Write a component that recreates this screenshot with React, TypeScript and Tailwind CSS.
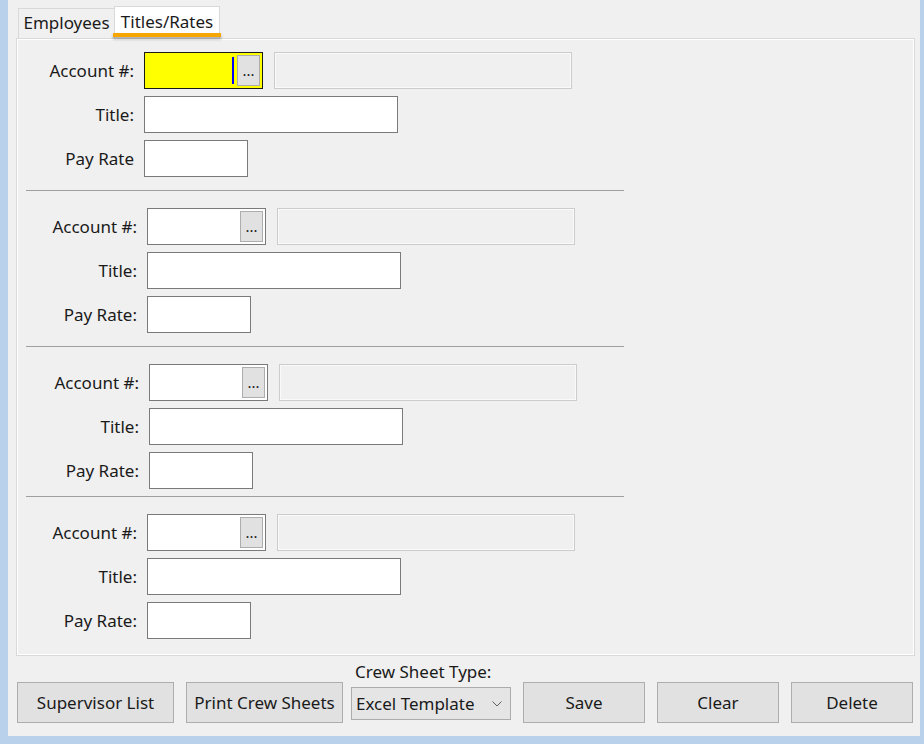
import React from "react";

const font = { fontFamily: '"Noto Sans", "Open Sans", sans-serif' };

type SectionProps = {
  labelWidth: string;
  top: string;
  focused?: boolean;
  payLabel: string;
};

const Section = ({ labelWidth, top, focused, payLabel }: SectionProps) => {
  return (
    <div className={`flex flex-col gap-[7px] ${top}`}>
      <div className="flex items-center">
        <span className={`${labelWidth} mr-[10px] text-right`}>Account #:</span>
        {focused ? (
          <div className="flex h-[37px] w-[119px] items-stretch border border-[#1a1a1a] bg-[#ffff00] p-[2px]">
            <div className="flex flex-1 items-center justify-end pr-[3px]">
              <div className="h-[27px] w-[2px] bg-[#0000ff]" />
            </div>
            <button className="flex w-[23px] items-end justify-center border border-[#adadad] bg-[#e1e1e1] pb-[7px] text-[15px] leading-none">
              ...
            </button>
          </div>
        ) : (
          <div className="flex h-[37px] w-[119px] items-stretch border border-[#7a7a7a] bg-white p-[2px]">
            <div className="flex-1" />
            <button className="flex w-[23px] items-end justify-center border border-[#adadad] bg-[#e1e1e1] pb-[7px] text-[15px] leading-none">
              ...
            </button>
          </div>
        )}
        <div className="ml-[11px] h-[37px] w-[298px] border border-[#cccccc] bg-[#f0f0f0] shadow-[inset_1px_1px_0_#fafafa,inset_-1px_-1px_0_#fafafa]" />
      </div>
      <div className="flex items-center">
        <span className={`${labelWidth} mr-[10px] text-right`}>Title:</span>
        <div className="h-[37px] w-[254px] border border-[#7a7a7a] bg-white" />
      </div>
      <div className="flex items-center">
        <span className={`${labelWidth} mr-[10px] text-right`}>{payLabel}</span>
        <div className="h-[37px] w-[104px] border border-[#7a7a7a] bg-white" />
      </div>
    </div>
  );
};

const Divider = ({ top }: { top: string }) => (
  <div className={`ml-[9px] h-px w-[598px] bg-[#a0a0a0] ${top}`} />
);

const BottomButton = ({ label, width }: { label: string; width: string }) => (
  <button
    className={`h-[41px] ${width} border border-[#adadad] bg-[#e1e1e1] text-[17px] text-[#1a1a1a]`}
  >
    {label}
  </button>
);

export default function App() {
  return (
    <div
      className="h-[744px] w-[924px] overflow-hidden bg-[#b9d1ea] text-[17px] text-[#1a1a1a]"
      style={font}
    >
      <div className="ml-[8px] h-[736px] w-[912px] bg-[#f0f0f0]">
        {/* tab headers */}
        <div className="flex h-[38px] items-end pl-[10px]">
          <div className="flex h-[30px] w-[96px] items-center justify-center border-l border-t border-[#d9d9d9] pb-[1px]">
            Employees
          </div>
          <div className="relative flex h-[32px] w-[106px] items-start justify-center border-x border-t border-[#d9d9d9] bg-white pt-[2px]">
            Titles/Rates
            <div className="absolute bottom-[1px] left-[-2px] h-[4px] w-[108px] bg-[#f7a600] shadow-[0_2px_3px_rgba(0,0,0,0.35)]" />
          </div>
        </div>

        {/* tab page */}
        <div className="ml-[8px] h-[618px] w-[899px] border border-[#d9d9d9] shadow-[inset_1px_1px_0_#fff,inset_-1px_-1px_0_#fff]">
          <Section labelWidth="w-[117px]" top="mt-[13px]" focused payLabel="Pay Rate" />
          <Divider top="mt-[13px]" />
          <Section labelWidth="w-[120px]" top="mt-[17px]" payLabel="Pay Rate:" />
          <Divider top="mt-[13px]" />
          <Section labelWidth="w-[122px]" top="mt-[17px]" payLabel="Pay Rate:" />
          <Divider top="mt-[7px]" />
          <Section labelWidth="w-[120px]" top="mt-[17px]" payLabel="Pay Rate:" />
        </div>

        {/* bottom actions */}
        <div className="mt-[6px] flex items-end pl-[9px]">
          <BottomButton label="Supervisor List" width="w-[157px]" />
          <div className="ml-[12px]">
            <BottomButton label="Print Crew Sheets" width="w-[157px]" />
          </div>
          <div className="ml-[8px] flex flex-col">
            <span className="pl-[4px] leading-[20px]">Crew Sheet Type:</span>
            <div className="mb-[3px] mt-[5px] flex h-[33px] w-[160px] items-center justify-between border border-[#acacac] bg-[#e5e5e5] pl-[4px] pr-[8px]">
              <span>Excel Template</span>
              <svg width="10" height="6" viewBox="0 0 10 6" fill="none">
                <path d="M0.5 0.5 L5 5 L9.5 0.5" stroke="#606060" strokeWidth="1" />
              </svg>
            </div>
          </div>
          <div className="ml-[12px]">
            <BottomButton label="Save" width="w-[122px]" />
          </div>
          <div className="ml-[12px]">
            <BottomButton label="Clear" width="w-[122px]" />
          </div>
          <div className="ml-[12px]">
            <BottomButton label="Delete" width="w-[122px]" />
          </div>
        </div>
      </div>
    </div>
  );
}
